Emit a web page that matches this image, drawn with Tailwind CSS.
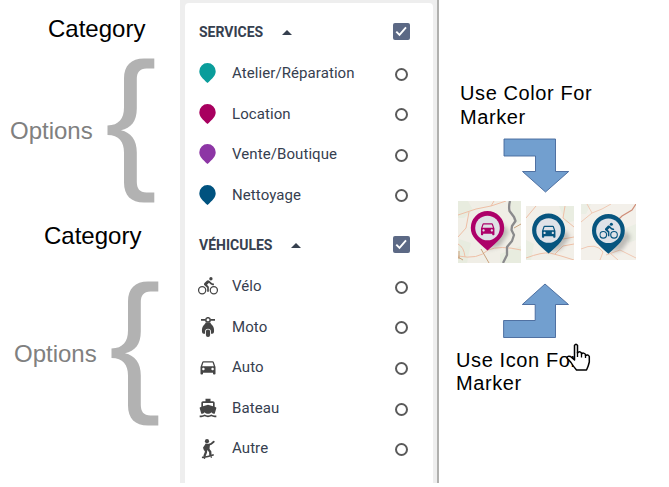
<!DOCTYPE html>
<html lang="fr">
<head>
<meta charset="utf-8">
<title>Marker filters</title>
<script src="https://cdn.jsdelivr.net/npm/@tailwindcss/browser@4"></script>
</head>
<body class="bg-white overflow-hidden">
<svg class="hidden">
  <defs>
    <symbol id="pin" viewBox="0 0 17 20"><path d="M8.500 0A8.200 8.200 0 0 0 .3 8.200C.3 12.500 3.600 15.400 8.500 20C13.400 15.400 16.700 12.500 16.700 8.200A8.200 8.200 0 0 0 8.500 0Z" fill="currentColor"/></symbol>
    <symbol id="bike" viewBox="0 0 24 24"><g fill="currentColor"><circle cx="15.500" cy="3.300" r="2"/><path d="M10.800 10.500l2.400-2.400.8.800c1.300 1.300 3 2.100 5.100 2.100V9c-1.500 0-2.700-.6-3.600-1.500l-1.900-1.900c-.5-.4-1-.6-1.600-.6s-1.100.2-1.400.6L7.800 8.400c-.4.400-.6.900-.6 1.400 0 .6.200 1.100.6 1.400L11 14v5h2v-6.200z"/></g><g fill="none" stroke="currentColor" stroke-width="1.500"><circle cx="5" cy="17" r="4.300"/><circle cx="19" cy="17" r="4.300"/></g></symbol>
    <symbol id="car" viewBox="0 0 24 24"><path fill="currentColor" d="M18.920 6.010C18.720 5.420 18.160 5 17.500 5h-11c-.66 0-1.210.42-1.420 1.010L3 12v8c0 .55.450 1 1 1h1c.55 0 1-.45 1-1v-1h12v1c0 .55.450 1 1 1h1c.55 0 1-.45 1-1v-8l-2.080-5.990zM6.500 16c-.83 0-1.500-.67-1.500-1.500S5.670 13 6.500 13s1.500.67 1.500 1.500S7.330 16 6.500 16zm11 0c-.83 0-1.500-.67-1.500-1.500s.67-1.500 1.500-1.500 1.500.67 1.500 1.500-.67 1.500-1.500 1.500zM5 11l1.500-4.500h11L19 11H5z"/></symbol>
    <symbol id="boat" viewBox="0 0 24 24"><path fill="currentColor" d="M20 21c-1.390 0-2.780-.47-4-1.320-2.440 1.710-5.560 1.710-8 0C6.780 20.530 5.390 21 4 21H2v2h2c1.380 0 2.740-.35 4-.99 2.520 1.290 5.480 1.290 8 0 1.260.65 2.620.99 4 .99h2v-2h-2zM3.950 19H4c1.600 0 3.020-.88 4-2 .98 1.120 2.400 2 4 2s3.020-.88 4-2c.98 1.120 2.400 2 4 2h.05l1.890-6.680c.08-.26.060-.54-.06-.78s-.34-.42-.6-.5L20 10.620V6c0-1.100-.9-2-2-2h-3V1H9v3H6c-1.100 0-2 .9-2 2v4.620l-1.290.42c-.26.080-.48.260-.6.500s-.15.520-.06.780L3.950 19zM6 6h12v3.970L12 8 6 9.970V6z"/></symbol>
    <symbol id="moto" viewBox="0 0 20 20"><path d="M3 2.900H7.600M12.400 2.900H17" stroke="currentColor" stroke-width="1.700"/><circle cx="10" cy="2.900" r="2.200" fill="none" stroke="currentColor" stroke-width="1.500"/><path fill="currentColor" d="M7.700 5.500h4.600c.4 1.200 1.200 1.700 2.200 3 1.300 1.600 1.800 3.800 1.500 6.300-.1 1.300-.8 1.900-1.600 2h-1.400v-2c0-1.900-1.200-3.100-3-3.100s-3 1.200-3 3.100v2H5.600c-.8-.1-1.500-.7-1.600-2-.3-2.500.2-4.700 1.500-6.300C6.500 7.200 7.300 6.700 7.700 5.500z"/><rect x="7.900" y="12.500" width="4.200" height="7.500" rx="2" fill="currentColor"/></symbol>
    <symbol id="skate" viewBox="0 0 20 20"><g fill="none" stroke="currentColor" stroke-linecap="round" stroke-linejoin="round"><path d="M9.800 4.800L9 10.600" stroke-width="4.600" stroke-linecap="butt"/><path d="M10.500 5.800L13.200 4.900L15.700 2.700M7.900 6L6 8.700L6.800 10.800" stroke-width="1.900"/><path d="M10 10L12.200 12.700L12.400 16M8.200 10L7.900 13.300L6.600 16.600" stroke-width="2.300"/><path d="M4.700 18.300Q10 18 15 16" stroke-width="1.800"/></g><g fill="currentColor"><circle cx="9" cy="2.200" r="2.100"/><circle cx="6.500" cy="19.200" r=".8"/><circle cx="13.300" cy="18.100" r=".8"/></g></symbol>
    <symbol id="brace" viewBox="107 57.500 48 145"><path fill="#b2b2b2" d="M154.300 58H144C131 58 124 65 124 78V107C124 118 119 124.800 107.500 125V134.500C119 134.700 124 141 124 152V182C124 195 131 202 144 202H154.300V192H146.500C139.500 192 136.800 188 136.800 181V152C136.800 139 131 132 121 129.700C131 127.500 136.800 121 136.800 108V79C136.800 72 139.500 68 146.500 68H154.300Z"/></symbol>
    <symbol id="check" viewBox="0 0 17 17"><rect width="17" height="17" rx="2" fill="#5c6985"/><path d="M3.300 8.600L6.500 11.900L13 4.400" fill="none" stroke="#fff" stroke-width="1.900"/></symbol>
    <filter id="soft" x="-30%" y="-30%" width="170%" height="170%"><feGaussianBlur stdDeviation="2"/></filter>
  </defs>
</svg>
<main class="flex h-[487px] w-[669px] font-['Liberation_Sans',Arial,sans-serif]">
  <section class="w-[180px] shrink-0 pt-[15px] text-[24px] leading-[28px] text-black">
    <h2 class="pl-[48px]">Category</h2>
    <div class="mt-[14.500px] flex items-center pl-[10px] text-[#808080]">
      <span class="w-[97px] pt-[2px]">Options</span><svg class="h-[145px] w-[48px]"><use href="#brace"/></svg>
    </div>
    <h2 class="mt-[19.500px] pl-[44px]">Category</h2>
    <div class="mt-[30.500px] flex items-center pl-[14px] text-[#808080]">
      <span class="w-[97px] pt-[2px]">Options</span><svg class="h-[145px] w-[48px]"><use href="#brace"/></svg>
    </div>
  </section>

  <aside class="h-[483px] w-[259px] shrink-0 border-r-2 border-[#b0b0ae] bg-[#eeeeee] pt-[3px] pr-[4px] pl-[5px] font-[Roboto,sans-serif] text-[15px] text-[#36404f]">
    <div class="h-[480px] rounded-t-[4px] bg-white pt-[8px] pr-[23px] pl-[14px]">
      <header class="flex h-[42px] items-center text-[14px] font-bold">
        <span class="w-[83px]">SERVICES</span><svg class="h-[5px] w-[10px]" viewBox="0 0 10 5"><path d="M0 5L5 0L10 5Z" fill="#36404f"/></svg><svg class="mb-[2px] ml-auto h-[17px] w-[17px]"><use href="#check"/></svg>
      </header>
      <ul class="tracking-[0.08px]">
        <li class="flex h-[40.500px] items-center"><svg class="mr-[16px] h-[20px] w-[17px] text-[#0a9d9b]"><use href="#pin"/></svg>Atelier/Réparation<span class="mt-[2px] mr-[2px] ml-auto size-[13px] rounded-full border-2 border-[#5a5a5a]"></span></li>
        <li class="flex h-[40.500px] items-center"><svg class="mr-[16px] h-[20px] w-[17px] text-[#a8005f]"><use href="#pin"/></svg>Location<span class="mt-[1px] mr-[2px] ml-auto size-[13px] rounded-full border-2 border-[#5a5a5a]"></span></li>
        <li class="flex h-[40.500px] items-center"><svg class="mr-[16px] h-[20px] w-[17px] text-[#8d36a5]"><use href="#pin"/></svg>Vente/Boutique<span class="mt-[2px] mr-[2px] ml-auto size-[13px] rounded-full border-2 border-[#5a5a5a]"></span></li>
        <li class="flex h-[41px] items-center"><svg class="mr-[16px] h-[20px] w-[17px] text-[#00527f]"><use href="#pin"/></svg>Nettoyage<span class="mt-[1px] mr-[2px] ml-auto size-[13px] rounded-full border-2 border-[#5a5a5a]"></span></li>
      </ul>
      <header class="mt-[8px] flex h-[42.500px] items-center text-[14px] font-bold">
        <span class="w-[92px] pt-[1px]">VÉHICULES</span><svg class="mt-px h-[5px] w-[10px]" viewBox="0 0 10 5"><path d="M0 5L5 0L10 5Z" fill="#36404f"/></svg><svg class="ml-auto h-[17px] w-[17px]"><use href="#check"/></svg>
      </header>
      <ul class="tracking-[0.08px]">
        <li class="flex h-[40.600px] items-center"><svg class="mr-[14px] -ml-[1px] size-[20px] text-[#454545]"><use href="#bike"/></svg>Vélo<span class="mt-[2px] mr-[2px] ml-auto size-[13px] rounded-full border-2 border-[#5a5a5a]"></span></li>
        <li class="flex h-[40.600px] items-center"><svg class="mr-[14px] -ml-[1px] size-[20px] text-[#454545]"><use href="#moto"/></svg>Moto<span class="mt-[2px] mr-[2px] ml-auto size-[13px] rounded-full border-2 border-[#5a5a5a]"></span></li>
        <li class="flex h-[40.600px] items-center"><svg class="mr-[14px] -ml-[1px] size-[20px] text-[#454545]"><use href="#car"/></svg>Auto<span class="mt-[2px] mr-[2px] ml-auto size-[13px] rounded-full border-2 border-[#5a5a5a]"></span></li>
        <li class="flex h-[40.600px] items-center"><svg class="mr-[14px] -ml-[1px] size-[20px] text-[#454545]"><use href="#boat"/></svg>Bateau<span class="mt-[2px] mr-[2px] ml-auto size-[13px] rounded-full border-2 border-[#5a5a5a]"></span></li>
        <li class="flex h-[40.600px] items-center"><svg class="mr-[14px] -ml-[1px] size-[20px] text-[#454545]"><use href="#skate"/></svg>Autre<span class="mt-[2px] mr-[2px] ml-auto size-[13px] rounded-full border-2 border-[#5a5a5a]"></span></li>
      </ul>
    </div>
  </aside>

  <section class="grow pt-[81px] text-[20px] tracking-[0.6px] text-black">
    <p class="pl-[21px] leading-[24px]">Use Color For<br>Marker</p>
    <svg class="mt-[9px] ml-[64px] h-[55px] w-[67px]" viewBox="503 138 67 55"><path d="M504 139H555.500V171.500H568.700L545.500 192L522.500 171.500H535.500V156H504Z" fill="#729fcf" stroke="#44679a" stroke-width=".9"/></svg>
    <div class="mt-[8px] flex h-[62px] items-start pl-[19px]">
      <svg class="h-[62px] w-[63px]" viewBox="458 201 63 62">
        <path fill="#f0eee6" d="M458 201h63v62h-63z"/><path fill="#e8ecdf" d="M458 201h10l5 9-9 8h-6zM510 201h11v20l-7 4zM459 239l12 4-4 20h-9zM500 254l21-8v17h-21z"/>
        <g fill="none" stroke="#eebfa6" stroke-width="1"><path d="M458 215L476 209L491 206L506 201M491 206L494 201M458 256Q478 260 488 250Q500 245 521 250M465 257Q464 247 458 244M469 212L466 228L458 237"/></g><path d="M459 251v8M458 257l5 3M514 228l7-4M481 249l8 14" fill="none" stroke="#c9a27c"/>
        <path d="M487 250l16-26 6 8-9 14z" fill="#555" opacity=".35" filter="url(#soft)"/><path d="M510 201Q508.500 206 509.500 211L514 217L515.500 221L512 226L511.500 230L514 235L512 241L507 247L507 255L503 263" fill="none" stroke="#8a8a8c" stroke-width="2.300" stroke-linejoin="round"/>
        <path fill="#ad0069" d="M487.500 211A16.700 16.700 0 0 0 470.800 227.700C470.800 237 477 241 487.500 250.500C498 241 504.200 237 504.200 227.700A16.700 16.700 0 0 0 487.500 211Z"/><circle cx="487.500" cy="228" r="12.300" fill="#dfe1e5"/><use href="#car" x="478.700" y="219.600" width="18" height="18" class="text-[#ad0069]"/>
      </svg>
      <svg class="mt-[5px] ml-[5px] h-[54px] w-[48px]" viewBox="526 206 48 54">
        <path fill="#f2efe8" d="M526 206h48v54h-48z"/><path fill="#e9ede1" d="M559 206h15v15l-8 2zM526 240l8 4-3 16h-5z"/>
        <g fill="none" stroke="#eebfa6" stroke-width="1"><path d="M565 206L563 218L574 227M526 258Q542 252 550 253Q562 256 574 260M563 239L574 237M526 218L536 206M555 254L563 246L574 244"/></g>
        <path d="M549 253l16-23 5 7-9 12z" fill="#555" opacity=".35" filter="url(#soft)"/>
        <path fill="#07557f" d="M548.600 213.500A16.500 16.500 0 0 0 532.100 230C532.100 239.500 538 244 548.600 253.500C559.200 244 565.100 239.500 565.100 230A16.500 16.500 0 0 0 548.600 213.500Z"/><circle cx="548.600" cy="230.500" r="12.300" fill="#dfe2e8"/><use href="#car" x="539.700" y="222" width="18" height="18" class="text-[#07557f]"/>
      </svg>
      <svg class="mt-[3px] ml-[7px] h-[56px] w-[55px]" viewBox="581 204 55 56">
        <path fill="#f3f0ea" d="M581 204h55v56h-55z"/><path fill="#ebeee4" d="M581 204h10l-5 10h-5zM626 228l10-4v16l-8 3z"/>
        <g fill="none" stroke="#f0c9b4" stroke-width="1"><path d="M581 222L592 213L602 209L611 204M581 249Q596 242 603 252L600 260M606 255L620 250L636 258M587 204L592 213M618 260L610 253"/></g><path d="M636 204L632 210L622 216L617 221" fill="none" stroke="#cf8d78" stroke-width="1.200"/>
        <path d="M609 253l16-23 6 7-9 13z" fill="#555" opacity=".35" filter="url(#soft)"/>
        <path fill="#07557f" d="M608.400 214A16.400 16.400 0 0 0 592 230.400C592 240 598 244 608.400 253.800C618.800 244 624.800 240 624.800 230.400A16.400 16.400 0 0 0 608.400 214Z"/><circle cx="608.400" cy="230.700" r="12.300" fill="#dfe2e8"/><use href="#bike" x="599.400" y="221.700" width="18.500" height="18.500" class="text-[#07557f]"/>
      </svg>
    </div>
    <svg class="mt-[20px] ml-[64px] h-[56px] w-[67px]" viewBox="503 283 67 56"><path d="M503.600 337.500H555.500V304.500H568.500L545 284L522.300 304.500H535.200V320.500H503.600Z" fill="#729fcf" stroke="#44679a" stroke-width=".9"/></svg>
    <div class="relative mt-[10px] pl-[17px] leading-[23px]">
      <p>Use Icon For<br>Marker</p>
      <svg class="absolute -top-[6px] left-[127px] h-[29px] w-[25px]" viewBox="566 343 25 29"><path d="M574.500 360V345.500Q576 343 577.500 345.500V353Q579.500 350.500 581.500 353V354Q583.500 352 585.500 354.500V355.500Q588 354 589.300 356.500V362Q588.500 366 586.500 370H576.500Q573 366 571 362.500L567 358Q567.500 355.500 570.500 356.500Z" fill="#fff" stroke="#000" stroke-width="1.500" stroke-linejoin="round"/><path d="M577.500 352v5M581.500 353.500v4M585.500 355v3" stroke="#000" stroke-width="1.300"/></svg>
    </div>
  </section>
</main>
</body>
</html>
